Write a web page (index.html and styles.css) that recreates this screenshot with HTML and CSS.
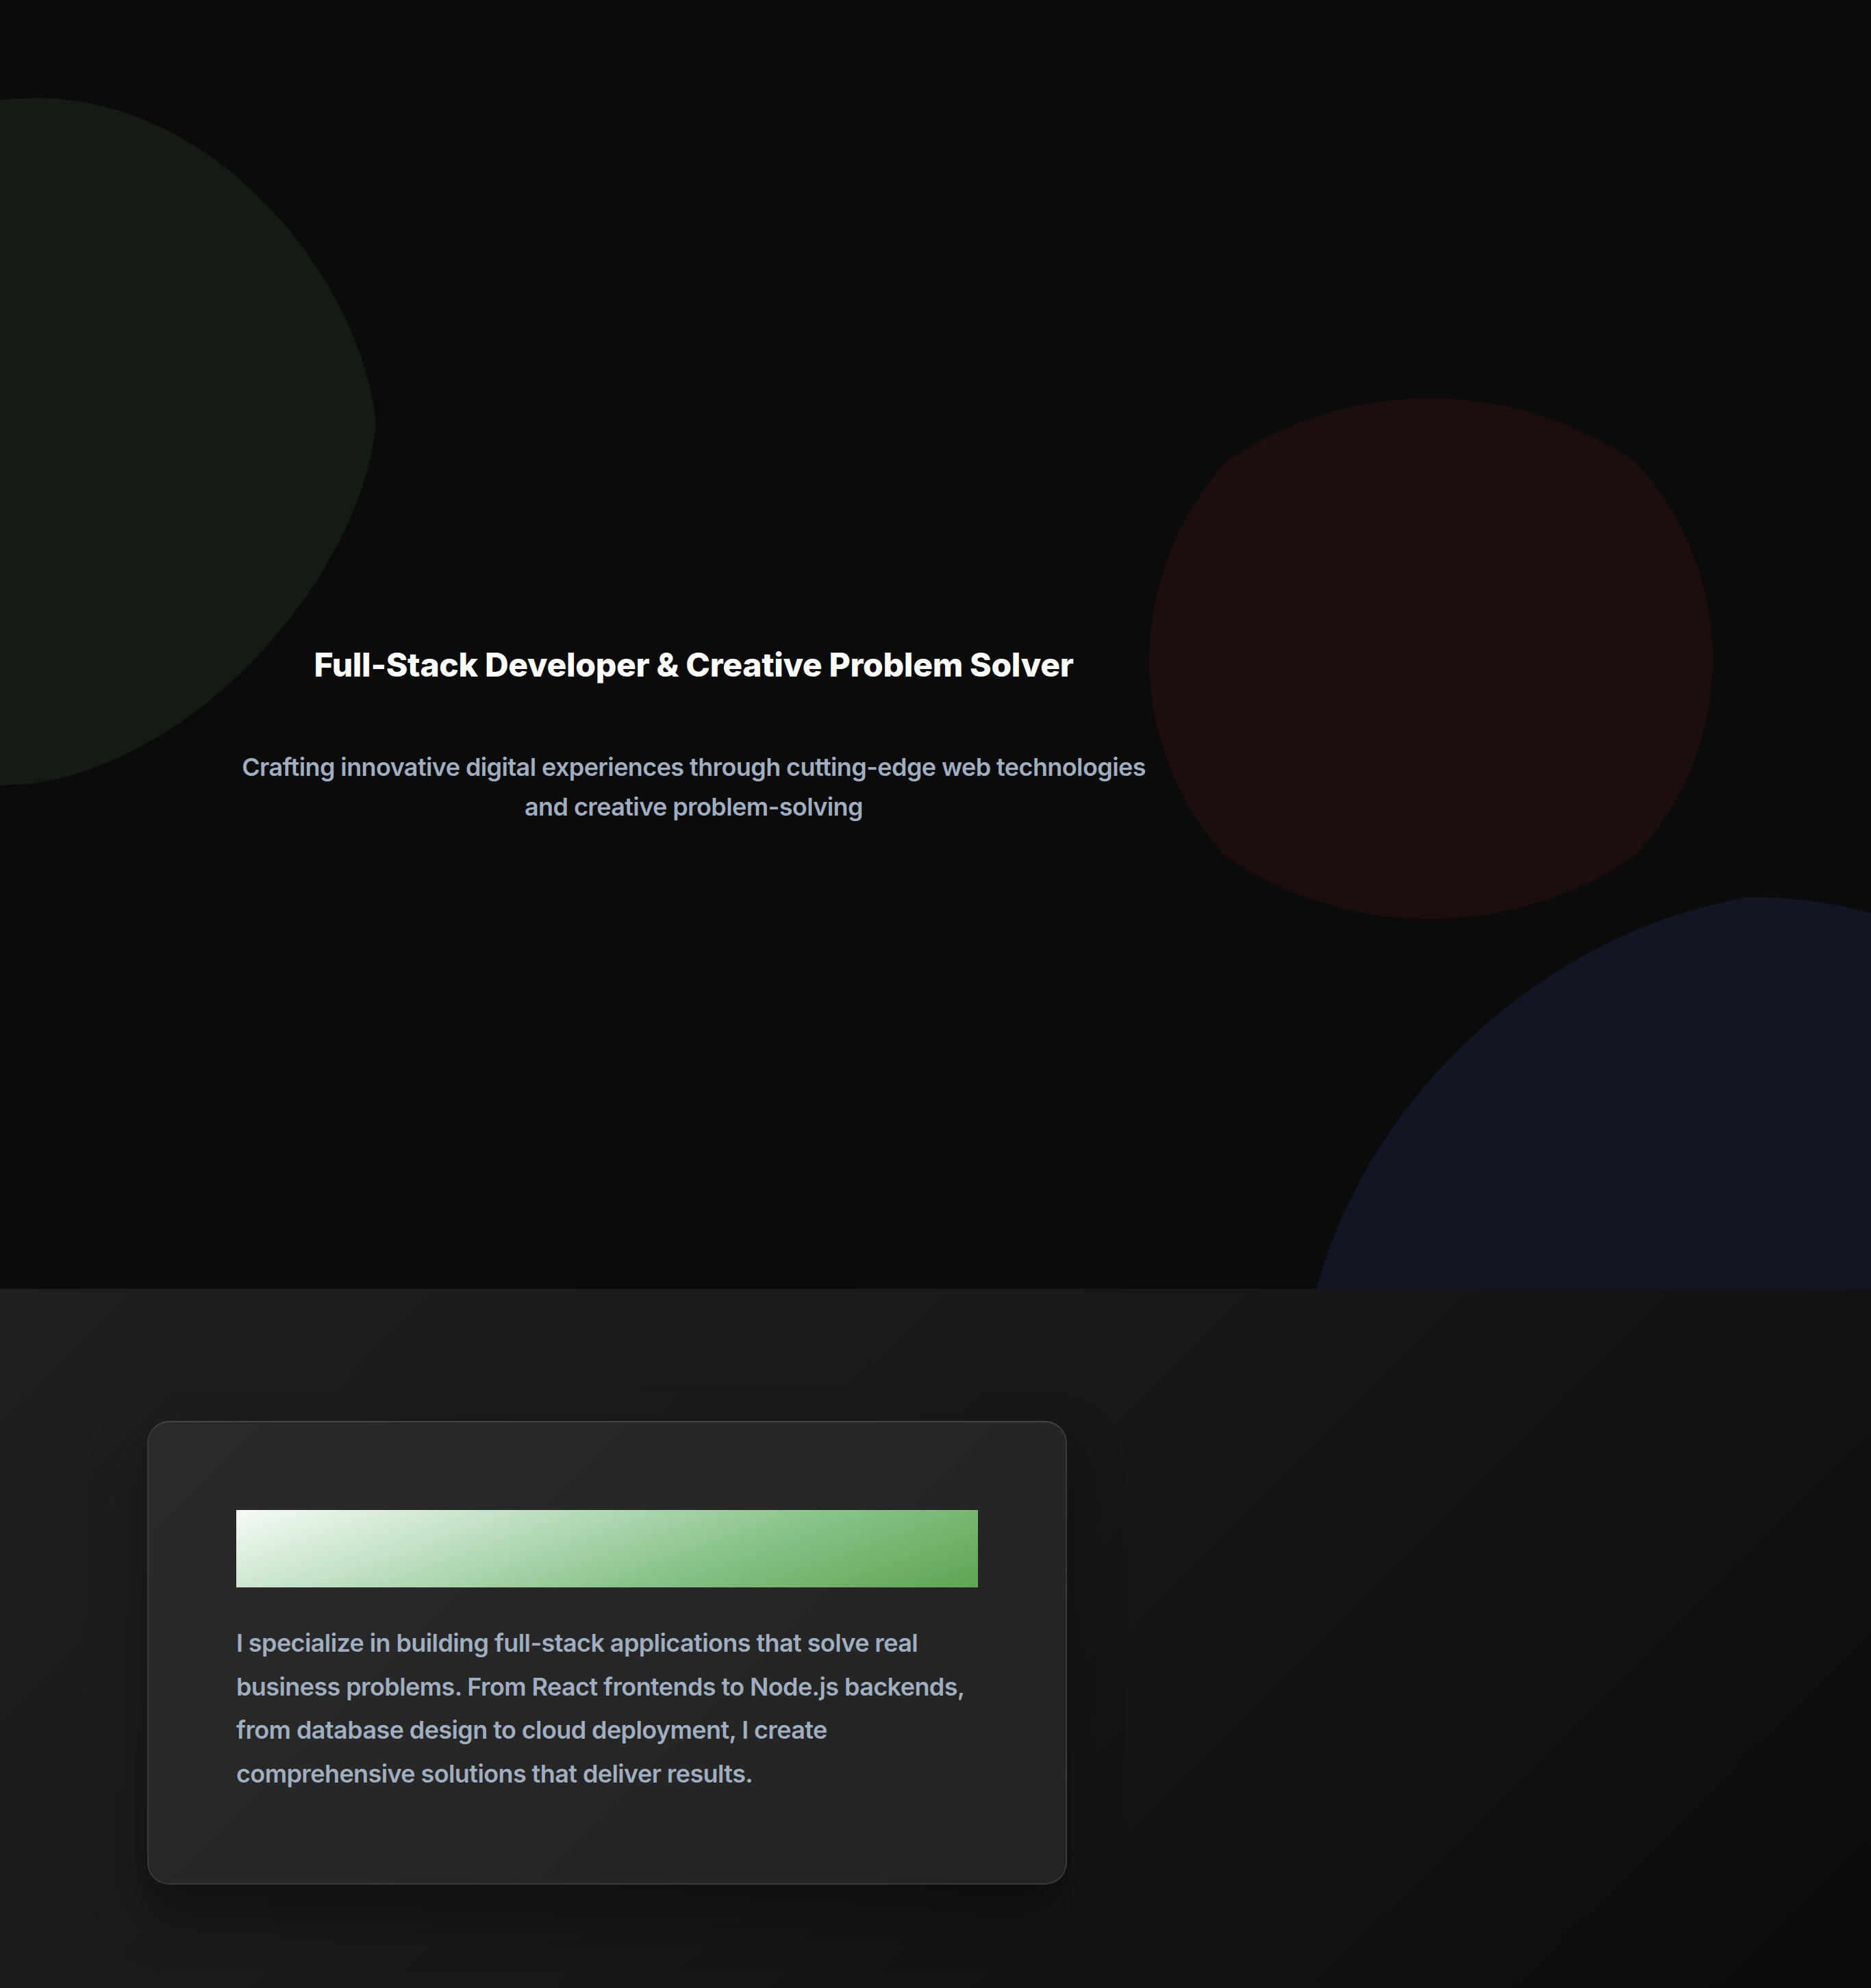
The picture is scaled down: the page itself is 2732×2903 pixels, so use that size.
FILE: index.html
```html
<!DOCTYPE html>
<html lang="en">
<head>
<meta charset="utf-8">
<title>Portfolio</title>
<link rel="stylesheet" href="styles.css">
</head>
<body>
<section class="hero">
  <svg class="blobs" viewBox="0 0 2732 1882" preserveAspectRatio="none" aria-hidden="true">
    <path class="blob blob-green" d="M 61 143 C 330 150, 530 420, 549 619 C 530 830, 300 1110, 42 1145 C -40 1150, -200 1150, -200 1000 L -200 300 C -200 160, -60 145, 61 143 Z"/>
    <path class="blob blob-red" d="M 1793 672 A 527 527 0 0 1 2388 675 A 421 421 0 0 1 2388 1249 A 530 530 0 0 1 1788 1249 A 427 427 0 0 1 1793 672 Z"/>
    <path class="blob blob-blue" d="M 2554 1310 C 2250 1360, 1960 1620, 1905 1960 L 2900 1960 L 2900 1420 C 2800 1340, 2680 1310, 2554 1310 Z"/>
  </svg>
  <div class="hero-grid">
    <div class="hero-copy">
      <h1 class="hero-title">Full-Stack Developer &amp; Creative Problem Solver</h1>
      <p class="hero-subtitle">Crafting innovative digital experiences through cutting-edge web technologies and creative problem-solving</p>
    </div>
    <div class="hero-side"></div>
  </div>
</section>
<section class="about">
  <div class="about-grid">
    <div class="about-card">
      <div class="about-bar"></div>
      <p class="about-text">I specialize in building full-stack applications that solve real business problems. From React frontends to Node.js backends, from database design to cloud deployment, I create comprehensive solutions that deliver results.</p>
    </div>
    <div class="about-side"></div>
  </div>
</section>
</body>
</html>
```

FILE: styles.css
```css
* { box-sizing: border-box; }

html, body {
  margin: 0;
  padding: 0;
  background: #0b0b0b;
  font-family: Inter, "Noto Sans", "Liberation Sans", sans-serif;
}

.hero {
  position: relative;
  height: 1882px;
  overflow: hidden;
  background: #0b0b0b;
}

.blobs {
  position: absolute;
  top: 0;
  left: 0;
  width: 2732px;
  height: 1882px;
}

.blob-green { fill: #141a14; }
.blob-red { fill: #1c0e0e; }
.blob-blue { fill: #121524; }

.hero-grid {
  position: relative;
  display: grid;
  grid-template-columns: 2026px 1fr;
  padding-top: 942px;
}

.hero-copy {
  display: flex;
  flex-direction: column;
  align-items: center;
  text-align: center;
}

.hero-title {
  margin: 0;
  font-size: 48px;
  line-height: 57.6px;
  font-weight: 800;
  color: #ffffff;
  letter-spacing: -0.3px;
}

.hero-subtitle {
  margin: 91px 0 0;
  max-width: 1344px;
  font-size: 36px;
  line-height: 58.5px;
  font-weight: 600;
  color: #a0aec0;
  letter-spacing: -0.6px;
}

.about {
  background: linear-gradient(135deg, #1f1f1f 0%, #171717 50%, #0b0b0b 100%);
  padding: 193px 0 192px;
}

.about-grid {
  display: grid;
  grid-template-columns: 1343px 1fr;
  max-width: 2304px;
  margin: 0 auto;
  padding-left: 1px;
}

.about-card {
  background: linear-gradient(135deg, #2a2a2a 0%, #232323 100%);
  border: 2px solid #3a3a3a;
  border-top-color: #444444;
  border-radius: 32px;
  padding: 128px;
  box-shadow: 0 40px 80px rgba(0, 0, 0, 0.35);
}

.about-bar {
  height: 113px;
  background: linear-gradient(160deg, #f6faf7 0%, #b9dcbc 35%, #86c186 65%, #5ea552 100%);
}

.about-text {
  margin: 50px 0 0;
  font-size: 36px;
  line-height: 63.5px;
  font-weight: 600;
  color: #a0aec0;
  letter-spacing: -0.6px;
}
```
